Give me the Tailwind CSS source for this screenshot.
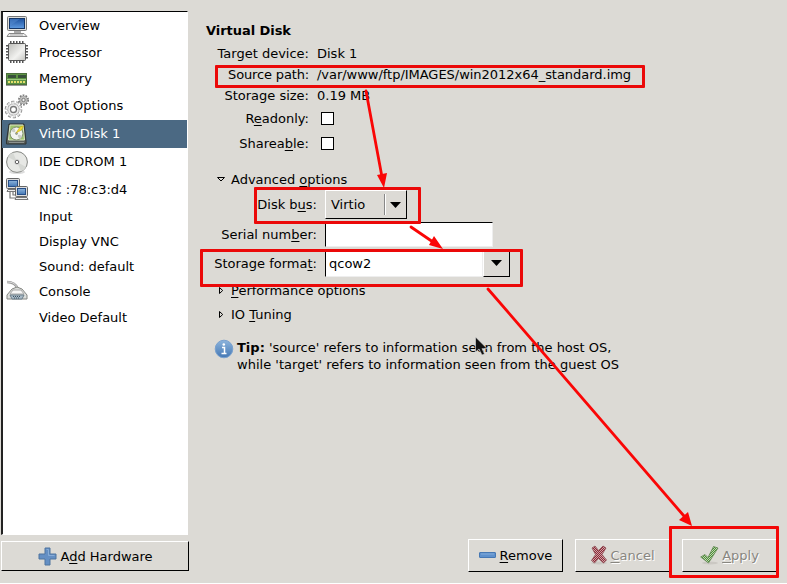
<!DOCTYPE html>
<html lang="en">
<head>
<meta charset="utf-8">
<title>Virtual Disk</title>
<script src="https://cdn.jsdelivr.net/npm/@tailwindcss/browser@4"></script>
</head>
<body class="relative flex h-[584px] w-[787px] overflow-hidden bg-[#dcdad5] font-['DejaVu_Sans',sans-serif] text-[13px] leading-[17px] text-black">
<svg class="absolute h-0 w-0">
  <defs>
    <linearGradient id="blue" x2="0" y2="1"><stop stop-color="#1c4f9c"/><stop offset="1" stop-color="#5f9be0"/></linearGradient>
    <linearGradient id="sky" x2="0" y2="1"><stop stop-color="#8db4dc"/><stop offset="1" stop-color="#4477b4"/></linearGradient>
    <linearGradient id="metal" x2="1" y2="1"><stop stop-color="#bcbcb8"/><stop offset=".6" stop-color="#f2f2f0"/><stop offset="1" stop-color="#c4c4c0"/></linearGradient>
    <pattern id="redDots" width="2" height="2" patternUnits="userSpaceOnUse"><path fill="#cfa3a6" d="M0 0h2v2H0z"/><path fill="#8c2a38" d="M0 0h1v1H0zM1 1h1v1H1z"/></pattern>
    <pattern id="greenDots" width="2" height="2" patternUnits="userSpaceOnUse"><path fill="#bfd6b0" d="M0 0h2v2H0z"/><path fill="#4c8c38" d="M0 0h1v1H0zM1 1h1v1H1z"/></pattern>
  </defs>
</svg>

<aside class="flex w-[189px] shrink-0 flex-col pl-px pt-[11px]">
  <ul class="flex h-[524px] w-[187px] flex-col border-b border-l-2 border-r border-t border-b-white border-l-[#222] border-r-white border-t-black bg-white [&>li]:flex [&>li]:shrink-0 [&>li]:items-center [&>li]:gap-[10px] [&>li]:pl-[2px]">
    <li class="h-[27px]"><svg class="h-6 w-6" viewBox="0 0 24 24"><rect x="2.500" y="2.500" width="19" height="14" rx="1" fill="#dededa" stroke="#777"/><rect x="4.500" y="4.500" width="15" height="10" fill="url(#blue)" stroke="#143668"/><path d="M5 5h10l-10 7z" fill="#568bd0" opacity=".5"/><path d="M9 17h7v2H9z" fill="#aaa"/><path d="M4 19.500h15l3 3H2z" fill="#eee" stroke="#888"/><path d="M5 21h13" stroke="#aaa"/></svg><span>Overview</span></li>
    <li class="h-[26px]"><svg class="h-6 w-6" viewBox="0 0 24 24"><path d="M5 2.500h15M5 21.500h15M2.500 5v15M21.500 5v15" fill="none" stroke="#555" stroke-width="3" stroke-dasharray="1.500 1.500"/><rect x="3.500" y="3.500" width="17" height="17" rx="1" fill="url(#metal)" stroke="#555"/></svg><span>Processor</span></li>
    <li class="h-[27px]"><svg class="h-6 w-6" viewBox="0 0 24 24"><rect x="1.500" y="6.500" width="20" height="11" fill="#5d9344" stroke="#4c6f3c"/><path d="M3 8h8v3H3zM13 8h8v3h-8z" fill="#38503a"/><path d="M2 12.500h19" stroke="#9cc97e"/><path d="M3 15h17" stroke="#e4e06c" stroke-width="2" stroke-dasharray="2 1"/><path d="M1 18.500h21" stroke="#999"/></svg><span>Memory</span></li>
    <li class="h-[28px]"><svg class="h-7 w-6 overflow-visible" viewBox="0 0 24 28"><g fill="none"><circle cx="8.500" cy="17.500" r="7.500" stroke="#858585" stroke-width="2.600" stroke-dasharray="2.900 1.812"/><circle cx="8.500" cy="17.500" r="5.800" fill="#eee" stroke="#a2a2a2"/><circle cx="8.500" cy="17.500" r="6.900" stroke="#e5e5e5" stroke-width="2.200" stroke-dasharray="2.400 1.936" stroke-dashoffset="-.2"/><circle cx="8.500" cy="17.500" r="3" fill="#fff" stroke="#777" stroke-width="1.300"/><circle cx="18.500" cy="8" r="4.600" stroke="#777" stroke-width="1.800" stroke-dasharray="1.750 1.140"/><circle cx="18.500" cy="8" r="3.800" fill="#c4c4c2" stroke="#999" stroke-width=".7"/><circle cx="18.500" cy="8" r="1.700" fill="#eee" stroke="#777"/></g></svg><span class="-mt-[2px]">Boot Options</span></li>
    <li class="-ml-px h-[28px] bg-[#4b6983] text-white"><svg class="ml-px h-6 w-6" viewBox="0 0 24 24"><path d="M4 2h15l2 17v3H1.500v-3z" fill="#5b605c" stroke="#303532"/><path d="M5 3h13l1.500 15H3.500z" fill="#9cc46b" stroke="#dbe5c4"/><circle cx="11.500" cy="11.500" r="6.500" fill="#f2f3ef" stroke="#80906d"/><path d="M11.500 11.500 6 9a6.500 6.500 0 0 1 3-3.500zM11.500 11.500l6 2.500a6.500 6.500 0 0 1-3 3.500z" fill="#c9cdc5"/><circle cx="11.500" cy="11.500" r="2" fill="#9ea498" stroke="#fff"/><path d="m11 11 4-6 3.500-1-2 4z" fill="#f2dc35" stroke="#bda10c" stroke-width=".5"/><path d="M4 20.500h15" stroke="#8d928f"/></svg><span class="-mt-[2px]">VirtIO Disk 1</span></li>
    <li class="h-[27px]"><svg class="h-6 w-6" viewBox="0 0 24 24"><ellipse cx="12" cy="22" rx="8" ry="2" fill="#ddd"/><circle cx="12" cy="12" r="10.400" fill="#e7e8e5" stroke="#858783"/><path d="m12 12-9-5a10 10 0 0 1 5-4.500zM12 12l9 5a10 10 0 0 1-5 4.500z" fill="#d6d8d4"/><circle cx="12" cy="12" r="2.700" fill="#ccc"/><circle cx="12" cy="12" r="1.700" fill="#fff" stroke="#666"/></svg><span>IDE CDROM 1</span></li>
    <li class="h-[28px]"><svg class="h-6 w-6" viewBox="0 0 24 24"><path d="M5 14v7h7M8 14v4h4" fill="none" stroke="#777" stroke-width="1.200"/><rect x="1.500" y="1.500" width="13" height="10" rx="1" fill="#ddd" stroke="#666"/><rect x="3.500" y="3.500" width="9" height="6" fill="url(#sky)" stroke="#264e88"/><path d="M3 12.500h9l2 2H2z" fill="#eee" stroke="#777"/><rect x="10.500" y="9.500" width="12" height="10" rx="1" fill="#ddd" stroke="#666"/><rect x="12.500" y="11.500" width="8" height="6" fill="url(#sky)" stroke="#264e88"/><path d="M11 20.500h11l1 2H10z" fill="#eee" stroke="#777"/></svg><span>NIC :78:c3:d4</span></li>
    <li class="h-[26px] !pl-[36px]">Input</li>
    <li class="h-[25px] !pl-[36px]">Display VNC</li>
    <li class="h-[25px] !pl-[36px]">Sound: default</li>
    <li class="h-[25px]"><svg class="h-6 w-6" viewBox="0 0 24 24"><path d="M2 2c6 0 9 2 11 7" fill="none" stroke="#999" stroke-width="2.500"/><path d="M2 2c6 0 9 2 11 7" fill="none" stroke="#ddd"/><path d="m7 9 5-2 5 2 5 6v4H2v-4z" fill="#dcdedb" stroke="#858783"/><path d="M8 10h8l3 4H5z" fill="#f7f7f7" stroke="#aaa"/><path d="M5 15h14l-2 4H7z" fill="#a8bac7" stroke="#6d7e8a"/><path d="M8 16.500h8M9 18h6" stroke="#3e5261" stroke-dasharray="1 1"/></svg><span>Console</span></li>
    <li class="h-[27px] !pl-[36px]">Video Default</li>
  </ul>
  <div class="mt-[6px] flex h-[30px] w-[188px] items-center justify-center gap-[3px] border-b border-l border-r border-t border-b-black border-l-white border-r-black border-t-white pl-px">
    <svg class="h-[19px] w-[19px]" viewBox="0 0 19 19"><path d="M7 1h5v6h6v5h-6v6H7v-6H1V7h6z" fill="#648fc4" stroke="#4e759f"/><path d="M8.500 2.500h2v6h6" fill="none" stroke="#87acd7"/></svg>
    <span>A<u class="underline-offset-[2px]">d</u>d Hardware</span>
  </div>
</aside>

<main class="flex min-w-0 flex-1 flex-col pt-[20px]">
  <h1 class="h-[22px] pl-[17px] pt-[2px] font-bold tracking-[-0.05px]">Virtual Disk</h1>
  <section class="flex flex-col [&>div]:flex [&>div]:items-center [&>div]:gap-2 [&>div>label]:w-[120px] [&>div>label]:shrink-0 [&>div>label]:text-right [&_u]:underline-offset-[2px]">
    <div class="h-[23px]"><label>Target device:</label><span>Disk 1</span></div>
    <div class="h-[20px] pb-[2px]"><label class="tracking-[-0.15px]">Source path:</label><span class="tracking-[-0.03px]">/var/www/ftp/IMAGES/win2012x64_standard.img</span></div>
    <div class="h-[22px] pb-[2px]"><label>Storage size:</label><span>0.19 MB</span></div>
    <div class="h-[23px]"><label>R<u>e</u>adonly:</label><span class="ml-[4px] h-[13px] w-[13px] border border-black bg-white"></span></div>
    <div class="h-[27px]"><label>Sharea<u>b</u>le:</label><span class="ml-[4px] h-[13px] w-[13px] border border-black bg-white"></span></div>
  </section>
  <section class="mt-[11px] flex flex-col [&>div]:flex [&>div]:items-center [&>div]:gap-2 [&>div>label]:w-[128px] [&>div>label]:shrink-0 [&>div>label]:text-right [&_u]:underline-offset-[2px]">
    <div class="h-[22px] pl-[28px] !gap-[6px]"><svg class="h-2 w-2" viewBox="0 0 8 8"><path d="M.5 2.500h7L4 6z" fill="none" stroke="#000"/></svg><span>Advanced <u>o</u>ptions</span></div>
    <div class="h-[29px]"><label>Disk b<u>u</u>s:</label>
      <div class="flex h-[29px] w-[82px] items-center border-b border-l border-r border-t border-b-black border-l-white border-r-black border-t-white pl-[5px]"><span class="w-[53px]">Virtio</span><i class="h-[21px] w-[2px] border-l border-r border-l-[#888] border-r-white"></i><svg class="ml-[4px] h-[6px] w-[11px]" viewBox="0 0 11 6"><path d="M0 0h11L5.500 6z"/></svg></div>
    </div>
    <div class="h-[31px]"><label>Serial num<u>b</u>er:</label><span class="h-[25px] w-[168px] border-b border-l border-r border-t border-b-[#eee] border-l-black border-r-[#eee] border-t-black bg-white"></span></div>
    <div class="h-[28px]"><label class="-mt-[2px]">Storage forma<u>t</u>:</label>
      <div class="flex h-[28px]"><span class="h-[27px] w-[158px] border-b border-l border-r border-b-[#eee] border-l-black border-r-[#eee] bg-white pl-[3px] pt-[5px]">qcow2</span><span class="flex h-[27px] w-[27px] items-center justify-center border-b border-l border-r border-b-black border-l-white border-r-black"><svg class="h-[6px] w-[11px]" viewBox="0 0 11 6"><path d="M0 0h11L5.500 6z"/></svg></span></div>
    </div>
    <div class="h-[25px] pl-[29px] !gap-[7px]"><svg class="h-2 w-[6px]" viewBox="0 0 6 8"><path d="M1.500 .5v6L4.700 3.500z" fill="none" stroke="#000"/></svg><span><u>P</u>erformance options</span></div>
    <div class="h-[23px] pl-[29px] !gap-[7px]"><svg class="h-2 w-[6px]" viewBox="0 0 6 8"><path d="M1.500 .5v6L4.700 3.500z" fill="none" stroke="#000"/></svg><span>IO <u>T</u>uning</span></div>
  </section>
  <div class="mt-[13px] flex gap-[3px] pl-[25px]">
    <svg class="h-5 w-5" viewBox="0 0 20 20"><circle cx="10" cy="10" r="8.800" fill="url(#sky)" stroke="#79a1cf"/><circle cx="9.800" cy="5.500" r="1.300" fill="#fff"/><path d="M8 8.500h2.500v6M7.500 14.500h5" fill="none" stroke="#fff" stroke-width="1.500"/></svg>
    <p class="whitespace-nowrap"><b>Tip:</b> 'source' refers to information seen from the host OS,<br><span class="tracking-[0.015px]">while 'target' refers to information seen from the guest OS</span></p>
  </div>
  <footer class="mb-[12px] mt-auto flex h-[33px] gap-[12px] pl-[279px] [&>div]:flex [&>div]:items-center [&>div]:justify-center [&>div]:border-b [&>div]:border-l [&>div]:border-r [&>div]:border-t [&>div]:border-b-black [&>div]:border-l-white [&>div]:border-r-black [&>div]:border-t-white [&_u]:underline-offset-[2px]">
    <div class="w-[95px] gap-[3px] pb-px"><svg class="h-5 w-[18px]" viewBox="0 0 18 20"><rect x=".5" y="7.500" width="16" height="5" rx=".5" fill="#5f91cd" stroke="#4778b3"/><path d="M2 9h13" stroke="#83abd9"/></svg><span><u>R</u>emove</span></div>
    <div class="w-[95px] gap-[2px] pb-px text-[#888680] [text-shadow:1px_1px_0_white]"><svg class="h-5 w-[18px]" viewBox="0 0 18 20"><ellipse cx="9" cy="18" rx="8" ry="1.500" fill="#cbc8c3"/><path d="M2 3 5 1l3.500 4.500L13 1l3 2-4 6.500 4.500 5.500-3 3-5-4.500-4 4.500-3-2.500 4-6z" fill="url(#redDots)" stroke="#8c4a52" stroke-width=".8"/></svg><span><u>C</u>ancel</span></div>
    <div class="w-[95px] gap-[3px] pb-px text-[#888680] [text-shadow:1px_1px_0_white]"><svg class="h-5 w-[19px]" viewBox="0 0 19 20"><ellipse cx="10" cy="18" rx="8" ry="1.500" fill="#cbc8c3"/><path d="m.7 12 4.300-2.500L8 12.500l5.500-11 4.500 1.500L8.500 18z" fill="url(#greenDots)" stroke="#5f8650" stroke-width=".8"/></svg><span><u>A</u>pply</span></div>
  </footer>
  <div class="absolute bottom-0 left-0 h-px w-full bg-white"></div>
</main>

<div class="absolute left-[215px] top-[65px] h-[23px] w-[430px] rounded-[1px] border-3 border-[#eb0909]"></div>
<div class="absolute left-[254px] top-[187px] h-[37px] w-[167px] rounded-[1px] border-3 border-[#eb0909]"></div>
<div class="absolute left-[200px] top-[249px] h-[38px] w-[323px] rounded-[1px] border-3 border-[#eb0909]"></div>
<div class="absolute left-[669px] top-[526px] h-[52px] w-[110px] rounded-[1px] border-3 border-[#f30707]"></div>
<svg class="absolute left-0 top-0 h-[584px] w-[787px]" viewBox="0 0 787 584">
  <g fill="none" stroke="#fa0606" stroke-width="2.800" stroke-linecap="round"><path d="m366 91 16 86M411 227l22 15M488 289l196 227"/></g>
  <path fill="#fa0606" d="m384 188-7-13 10-2zM443 249l-14-4 5-9zM692 526l-13-6 9-8z"/>
  <path d="M475.500 337v15l3.500-3 3 6 2.500-1-2.500-5.500h5z" fill="#111" stroke="#ddd" stroke-width=".6"/>
</svg>
</body>
</html>
